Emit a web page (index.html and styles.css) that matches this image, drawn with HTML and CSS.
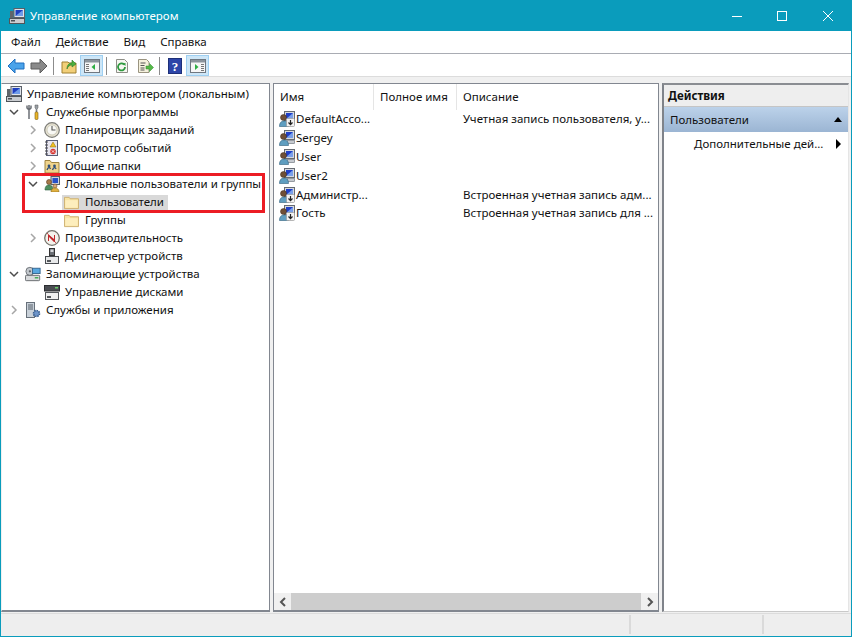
FILE: index.html
```html
<!DOCTYPE html>
<html lang="ru">
<head>
<meta charset="utf-8">
<title>Управление компьютером</title>
<link rel="stylesheet" href="styles.css">
</head>
<body>
<svg class="defs" width="0" height="0">
  <defs>
    <symbol id="computer" viewBox="0 0 16 16">
      <rect x="5" y="0.5" width="10.5" height="9" fill="#dfe3ea" stroke="#5a6068"/>
      <rect x="6.5" y="2" width="7.5" height="6" fill="#1f3fc0"/>
      <path d="M6.5 8 14 2v6z" fill="#6f9be8"/>
      <rect x="0.5" y="10.5" width="15" height="5" fill="#c9ccd0" stroke="#50555a"/>
      <rect x="2" y="12" width="4" height="1.5" fill="#4a4f55"/>
      <rect x="1" y="3" width="3.5" height="7" fill="#60656b"/>
    </symbol>
    <symbol id="tools" viewBox="0 0 16 16">
      <path d="M4 1v5M2 1.500v2.500l2 2 2-2V1.500M4 6v9" fill="none" stroke="#6b6f75" stroke-width="1.500"/>
      <path d="M10 1h3v3l-1 1v3h-1V5l-1-1z" fill="#9aa0a6" stroke="#555"  stroke-width=".5"/>
      <rect x="10" y="8" width="3" height="7.500" rx="1" fill="#e9b62c" stroke="#7a5a10" stroke-width=".6"/>
    </symbol>
    <symbol id="clock" viewBox="0 0 16 16">
      <circle cx="8" cy="8" r="7.300" fill="#e7e3d3" stroke="#7d7d78" stroke-width="1.200"/>
      <circle cx="8" cy="8" r="5" fill="#f8f8f4" stroke="#b9b5a0" stroke-width=".6"/>
      <path d="M8 4v4h3.500" fill="none" stroke="#555" stroke-width="1.100"/>
    </symbol>
    <symbol id="log" viewBox="0 0 16 16">
      <rect x="2.500" y="0.500" width="11" height="15" fill="#e8e6f0" stroke="#5a5f78"/>
      <path d="M1 2h3M1 5h3M1 8h3M1 11h3M1 14h3" stroke="#444" stroke-width="1"/>
      <path d="M9 2l3 5H6z" fill="#f0c020" stroke="#8a6a10" stroke-width=".5"/>
      <circle cx="9" cy="11.500" r="2.700" fill="#d8322e"/>
      <path d="M7.800 10.300l2.400 2.400M10.200 10.300l-2.400 2.400" stroke="#fff" stroke-width=".8"/>
    </symbol>
    <symbol id="share" viewBox="0 0 16 16">
      <path d="M1 15V2.500h5l1.500 2H15V15z" fill="#f0d48c" stroke="#a08440"/>
      <path d="M3 12c1-3 3-3 3.500-1M8.500 12c1-3 3-3 3.500-1" fill="none" stroke="#30507a" stroke-width="1.300"/>
      <circle cx="5" cy="8" r="1.400" fill="#30507a"/><circle cx="10.500" cy="8" r="1.400" fill="#30507a"/>
    </symbol>
    <symbol id="localusers" viewBox="0 0 16 16">
      <rect x="7" y="0.500" width="8.500" height="8" fill="#cfd3da" stroke="#5a6068"/>
      <rect x="8.500" y="2" width="5.500" height="5" fill="#2850c8"/>
      <circle cx="5" cy="6" r="2.500" fill="#a87a4a" stroke="#5a3a20" stroke-width=".6"/>
      <path d="M1 14c0-4 2-5 4-5s4 1 4 5z" fill="#4f8f5f" stroke="#2f5f3f" stroke-width=".6"/>
      <circle cx="11" cy="10" r="2" fill="#d8a878" stroke="#704a28" stroke-width=".6"/>
      <path d="M7 16c0-3 2-4 4-4s4 1 4 4z" fill="#e0b040" stroke="#8a6a18" stroke-width=".6"/>
    </symbol>
    <symbol id="folder" viewBox="0 0 16 16">
      <path d="M0.500 14.500V2.500h5l1 1.500h9v10.500z" fill="#f9e4a2" stroke="#cdb070"/>
      <path d="M1.500 13.500V5.500h13v8z" fill="#fdeebd"/>
    </symbol>
    <symbol id="perf" viewBox="0 0 16 16">
      <circle cx="8" cy="8" r="7.300" fill="#f4f2ec" stroke="#75736b" stroke-width="1.300"/>
      <path d="M4 5v6l1 0V7l5 5h1V5h-1v4L5 5z" fill="#c0282c"/>
      <path d="M3 3l9 10" stroke="#c0282c" stroke-width=".8"/>
    </symbol>
    <symbol id="device" viewBox="0 0 16 16">
      <rect x="5.500" y="0.500" width="5" height="7" fill="#6a6e74" stroke="#333"/>
      <rect x="6.500" y="1.500" width="3" height="2.500" fill="#d6d8dc"/>
      <rect x="1.500" y="8.500" width="13" height="7" fill="#e8e9ea" stroke="#4a4d52"/>
      <rect x="3" y="12" width="4" height="2" fill="#55585c"/>
    </symbol>
    <symbol id="storage" viewBox="0 0 18 16">
      <rect x="0.500" y="9.500" width="16" height="6" rx="1" fill="#d8dadc" stroke="#5d6166"/>
      <rect x="11" y="11.500" width="4" height="1.500" fill="#35a84a"/>
      <circle cx="5.500" cy="5" r="4.500" fill="#c3c8cd" stroke="#686c72"/>
      <circle cx="5.500" cy="5" r="1.300" fill="#5f6368"/>
      <rect x="8.500" y="1.500" width="8.500" height="6" fill="#58a7e0" stroke="#31618a"/>
    </symbol>
    <symbol id="disk" viewBox="0 0 16 16">
      <rect x="0.500" y="1.500" width="15" height="5.500" fill="#4a4d52" stroke="#2c2e31"/>
      <rect x="11" y="3" width="3" height="1.500" fill="#6ccf6a"/>
      <rect x="1.500" y="8.500" width="13" height="7" fill="#f0f0f0" stroke="#55585c"/>
      <rect x="3" y="12" width="4" height="2" fill="#55585c"/>
    </symbol>
    <symbol id="services" viewBox="0 0 16 16">
      <rect x="1.500" y="0.500" width="8" height="15" fill="#c9d1d9" stroke="#67707a"/>
      <path d="M3 3h5M3 5h5M3 7h5" stroke="#57616b"/>
      <circle cx="11.500" cy="11.500" r="3" fill="#6d94c9" stroke="#3a5e8e" stroke-width="1.600" stroke-dasharray="1.500 .8"/>
    </symbol>
    <symbol id="user" viewBox="0 0 16 16">
      <rect x="5.500" y="0.500" width="10" height="9" fill="#d6d9de" stroke="#666b72"/>
      <rect x="7" y="2" width="7" height="6" fill="#1f3fc8"/>
      <path d="M7 8 14 2v6z" fill="#7aa0ea"/>
      <rect x="8" y="10.500" width="7.500" height="3" fill="#c6cad0" stroke="#777c83" stroke-width=".7"/>
      <circle cx="4.500" cy="6.500" r="3" fill="#6f4f36" stroke="#3c2a1a" stroke-width=".5"/>
      <path d="M0.500 15.500c0-4 2-5.500 4.500-5.500s4.500 1.500 4.500 5.500z" fill="#5f9ec0" stroke="#2f5f7c" stroke-width=".6"/>
    </symbol>
    <symbol id="userdis" viewBox="0 0 16 16">
      <use href="#user" width="16" height="16"/>
      <rect x="7.500" y="7.500" width="8" height="8" rx="1" fill="#f2f2f2" stroke="#9a9a9a" stroke-width=".7"/>
      <path d="M11.500 9v4.500M9.500 11.500l2 2.200 2-2.200" fill="none" stroke="#222" stroke-width="1.200"/>
    </symbol>
  </defs>
</svg>

<div class="window">
  <header class="titlebar">
    <svg class="title-icon"><use href="#computer"/></svg>
    <span class="title-text">Управление компьютером</span>
    <div class="caption">
      <svg class="cap-btn" viewBox="0 0 46 30"><path d="M19 15.500h10" stroke="#fff"/></svg>
      <svg class="cap-btn" viewBox="0 0 46 30"><rect x="18.500" y="10.500" width="9" height="9" fill="none" stroke="#fff"/></svg>
      <svg class="cap-btn" viewBox="0 0 46 30"><path d="M18 10l10 10M28 10 18 20" stroke="#fff" fill="none"/></svg>
    </div>
  </header>

  <nav class="menubar">
    <span class="menu-item">Файл</span>
    <span class="menu-item">Действие</span>
    <span class="menu-item">Вид</span>
    <span class="menu-item">Справка</span>
  </nav>

  <div class="toolbar">
    <span class="tool"><svg class="tool-svg" viewBox="0 0 18 16"><path d="M1 8l7-7v4h9v6H8v4z" fill="#4aa3ea" stroke="#1f6fc0"/></svg></span>
    <span class="tool"><svg class="tool-svg" viewBox="0 0 18 16"><path d="M17 8l-7-7v4H1v6h9v4z" fill="#8a8a8a" stroke="#5c5c5c"/></svg></span>
    <span class="sep"></span>
    <span class="tool"><svg class="tool-svg" viewBox="0 0 18 16"><path d="M2 15V4h6l1 1h7v10z" fill="#f2cf78" stroke="#a08030"/><path d="M7 11c0-4 2-6 5-6V2l4 4-4 3V7c-2 0-4 1-5 4z" fill="#4caf3f" stroke="#2d7a25" stroke-width=".6"/></svg></span>
    <span class="tool tool-on"><svg class="tool-svg" viewBox="0 0 18 16"><rect x="1.500" y="1.500" width="15" height="13" fill="#f6f6f6" stroke="#6f7780"/><rect x="2" y="2" width="14" height="2.500" fill="#8c949c"/><path d="M3 6.500h3M3 8.500h3M3 10.500h3M3 12.500h3" stroke="#777"/><path d="M12 6v6L8.500 9z" fill="#2fae44"/></svg></span>
    <span class="sep"></span>
    <span class="tool"><svg class="tool-svg" viewBox="0 0 18 16"><path d="M3.500 1.500h8l3 3v10h-11z" fill="#f7f7f2" stroke="#8f8f88"/><path d="M12 9a3.500 3.500 0 1 1-1-2.500" fill="none" stroke="#2f9a3f" stroke-width="1.800"/><path d="M9.500 5.500l3-.5v3z" fill="#2f9a3f"/></svg></span>
    <span class="tool"><svg class="tool-svg" viewBox="0 0 18 16"><path d="M2.500 1.500h8l2.500 2.500v10.500H2.500z" fill="#f5f1dd" stroke="#9a9480"/><path d="M4.500 5h5M4.500 7.500h4M4.500 10h4M4.500 12h4" stroke="#555"/><path d="M10 8h3.500V5.500L17.500 9.500l-4 4V11H10z" fill="#55b948" stroke="#2f8a2a" stroke-width=".5"/></svg></span>
    <span class="sep"></span>
    <span class="tool"><svg class="tool-svg" viewBox="0 0 18 16"><rect x="2.500" y="0.500" width="13" height="15" fill="#2d45a8" stroke="#1d2f78"/><text class="help-mark" x="9" y="13">?</text></svg></span>
    <span class="tool tool-on"><svg class="tool-svg" viewBox="0 0 18 16"><rect x="1.500" y="1.500" width="15" height="13" fill="#f6f6f6" stroke="#6f7780"/><rect x="2" y="2" width="14" height="2.500" fill="#8c949c"/><path d="M12 6.500h3M12 8.500h3M12 10.500h3M12 12.500h3" stroke="#777"/><path d="M6 6v6l3.500-3z" fill="#2fae44"/></svg></span>
  </div>

  <main class="panes">
    <section class="pane tree">
      <div class="row"><span class="twist"></span><svg class="ico"><use href="#computer"/></svg><span class="label">Управление компьютером (локальным)</span></div>
      <div class="row l1"><svg class="chev"><path d="M1 3l4 4 4-4" class="chev-open"/></svg><svg class="ico"><use href="#tools"/></svg><span class="label">Служебные программы</span></div>
      <div class="row l2"><svg class="chev"><path d="M3 1l4 4-4 4" class="chev-closed"/></svg><svg class="ico"><use href="#clock"/></svg><span class="label">Планировщик заданий</span></div>
      <div class="row l2"><svg class="chev"><path d="M3 1l4 4-4 4" class="chev-closed"/></svg><svg class="ico"><use href="#log"/></svg><span class="label">Просмотр событий</span></div>
      <div class="row l2"><svg class="chev"><path d="M3 1l4 4-4 4" class="chev-closed"/></svg><svg class="ico"><use href="#share"/></svg><span class="label">Общие папки</span></div>
      <div class="row l2"><svg class="chev"><path d="M1 3l4 4 4-4" class="chev-open"/></svg><svg class="ico"><use href="#localusers"/></svg><span class="label">Локальные пользователи и группы</span></div>
      <div class="row l3"><span class="selected"><svg class="ico"><use href="#folder"/></svg><span class="label">Пользователи</span></span></div>
      <div class="row l3"><span class="plain"><svg class="ico"><use href="#folder"/></svg><span class="label">Группы</span></span></div>
      <div class="row l2"><svg class="chev"><path d="M3 1l4 4-4 4" class="chev-closed"/></svg><svg class="ico"><use href="#perf"/></svg><span class="label">Производительность</span></div>
      <div class="row l2"><span class="twist"></span><svg class="ico"><use href="#device"/></svg><span class="label">Диспетчер устройств</span></div>
      <div class="row l1"><svg class="chev"><path d="M1 3l4 4 4-4" class="chev-open"/></svg><svg class="ico"><use href="#storage"/></svg><span class="label">Запоминающие устройства</span></div>
      <div class="row l2"><span class="twist"></span><svg class="ico"><use href="#disk"/></svg><span class="label">Управление дисками</span></div>
      <div class="row l1"><svg class="chev"><path d="M3 1l4 4-4 4" class="chev-closed"/></svg><svg class="ico"><use href="#services"/></svg><span class="label">Службы и приложения</span></div>
      <div class="highlight"></div>
    </section>

    <section class="pane list">
      <div class="list-head">
        <span class="col col-name">Имя</span>
        <span class="col col-full">Полное имя</span>
        <span class="col col-desc">Описание</span>
      </div>
      <div class="list-body">
        <div class="list-row"><span class="cell-name"><svg class="ico"><use href="#userdis"/></svg><span class="user">DefaultAcco...</span></span><span class="cell-full"></span><span class="cell-desc">Учетная запись пользователя, у...</span></div>
        <div class="list-row"><span class="cell-name"><svg class="ico"><use href="#user"/></svg><span class="user">Sergey</span></span><span class="cell-full"></span><span class="cell-desc"></span></div>
        <div class="list-row"><span class="cell-name"><svg class="ico"><use href="#user"/></svg><span class="user">User</span></span><span class="cell-full"></span><span class="cell-desc"></span></div>
        <div class="list-row"><span class="cell-name"><svg class="ico"><use href="#user"/></svg><span class="user">User2</span></span><span class="cell-full"></span><span class="cell-desc"></span></div>
        <div class="list-row"><span class="cell-name"><svg class="ico"><use href="#userdis"/></svg><span class="user">Администр...</span></span><span class="cell-full"></span><span class="cell-desc">Встроенная учетная запись адм...</span></div>
        <div class="list-row"><span class="cell-name"><svg class="ico"><use href="#userdis"/></svg><span class="user">Гость</span></span><span class="cell-full"></span><span class="cell-desc">Встроенная учетная запись для ...</span></div>
      </div>
      <div class="hscroll">
        <span class="scroll-btn"><svg class="scroll-arrow" viewBox="0 0 8 10"><path d="M6 1 2 5l4 4" /></svg></span>
        <span class="scroll-thumb"></span>
        <span class="scroll-btn"><svg class="scroll-arrow" viewBox="0 0 8 10"><path d="M2 1l4 4-4 4" /></svg></span>
      </div>
    </section>

    <aside class="pane actions">
      <div class="act-head">Действия</div>
      <div class="act-group"><span>Пользователи</span><span class="tri-up"></span></div>
      <div class="act-item"><span>Дополнительные дей...</span><span class="tri-right"></span></div>
    </aside>
  </main>

  <footer class="statusbar">
    <span class="st st-main"></span>
    <span class="st st-mid"></span>
    <span class="st st-end"></span>
  </footer>
</div>
</body>
</html>
```

FILE: styles.css
```css
* { box-sizing: border-box; }
html, body { margin: 0; padding: 0; height: 100%; background: #fff; }
body { font: 11.5px/18px "Noto Sans", "Open Sans", sans-serif; color: #111; overflow: hidden; }
.defs { position: absolute; }

.window {
  width: 852px; height: 637px;
  display: flex; flex-direction: column;
  border: 1px solid #0a9cbc; border-top: 0;
  background: #f0f0f0;
}

.titlebar {
  height: 31px; flex: none;
  background: #0a9cbc; color: #fff;
  display: flex; align-items: center;
  padding-left: 8px;
  font-size: 11.5px;
}
.title-icon { width: 16px; height: 16px; margin-right: 5px; }
.caption { margin-left: auto; display: flex; }
.cap-btn { width: 46px; height: 30px; }

.menubar {
  height: 23px; flex: none;
  background: #fff;
  border-bottom: 1px solid #a9acb3;
  display: flex; align-items: center;
  padding-left: 10px; gap: 15px;
}

.toolbar {
  height: 23px; flex: none;
  background: #fff;
  border-bottom: 1px solid #dcdcdc;
  display: flex; align-items: center;
  padding: 1px 0 0 3px;
}
.tool { width: 23px; height: 21px; display: flex; align-items: center; justify-content: center; border: 1px solid transparent; }
.tool-on { background: #cde6f7; border-color: #9fd0f2; }
.tool-svg { width: 18px; height: 16px; }
.help-mark { font: bold 13px "Liberation Serif", serif; fill: #fff; text-anchor: middle; }
.sep { width: 1px; height: 18px; background: #8c8c8c; margin: 0 3px; }

.panes {
  flex: 1; min-height: 0;
  display: flex; gap: 3px;
  padding: 6px 2px 1px 0;
  background: #f0f0f0;
}
.pane { background: #fff; position: relative; }

.tree {
  width: 269px;
  border: 1px solid #828790; border-bottom-width: 2px;
  border-left-color: #f0f0f0;
  padding-top: 1px;
}
.row { height: 18px; display: flex; align-items: center; white-space: nowrap; padding-left: 2px; }
.row.l1 { padding-left: 7px; }
.row.l2 { padding-left: 26px; }
.row.l3 { padding-left: 60px; }
.row > .twist { width: 0; }
.chev { width: 10px; height: 10px; margin-right: 6px; flex: none; }
.row > .twist + .ico { margin-left: 16px; }
.row:first-child > .twist + .ico { margin-left: 2px; }
.chev-open, .chev-closed { fill: none; stroke-width: 1.5; }
.chev-open { stroke: #4d4d4d; }
.chev-closed { stroke: #a6a6a6; }
.ico { width: 16px; height: 16px; flex: none; }
.label { margin-left: 5px; line-height: 16px; }
.selected, .plain { display: flex; align-items: center; height: 15px; padding: 0 4px 0 2px; }
.selected { background: #d9d9d9; }
.selected .ico, .plain .ico { width: 15px; height: 15px; }
.selected .label, .plain .label { margin-left: 6px; }

.highlight {
  position: absolute; left: 20px; top: 89px;
  width: 243px; height: 40px;
  border: 3px solid #ec1c24;
  pointer-events: none;
}

.list {
  width: 386px;
  border: 1px solid #828790; border-bottom-width: 2px;
  display: flex; flex-direction: column;
}
.list-head { height: 26px; flex: none; display: flex; background: #fff; }
.col { padding-left: 6px; border-right: 1px solid #e5e5e5; line-height: 25px; }
.col-name { width: 100px; }
.col-full { width: 83px; }
.col-desc { flex: 1; border-right: 0; }
.list-body { flex: 1; }
.list-row { height: 18.8px; display: flex; align-items: center; white-space: nowrap; }
.cell-name { width: 100px; flex: none; display: flex; align-items: center; padding-left: 5px; }
.cell-full { width: 83px; flex: none; }
.cell-desc { padding-left: 6px; }
.user { margin-left: 1px; }

.hscroll { height: 17px; flex: none; display: flex; background: #f0f0f0; }
.scroll-btn { width: 17px; display: flex; align-items: center; justify-content: center; }
.scroll-arrow { width: 8px; height: 10px; fill: none; stroke: #555; stroke-width: 2; }
.scroll-thumb { flex: 1; background: #cdcdcd; }

.actions {
  flex: 1;
  border: 1px solid #c9c9c9; border-left: 2px solid #7f838a; border-top: 2px solid #8a8d92;
  border-right-color: #e5e5e5;
}
.act-head { height: 22px; background: #eeeeee; border-bottom: 1px solid #c5c5c5; font-weight: 700; padding-left: 4px; line-height: 21px; }
.act-group {
  height: 25px; background: linear-gradient(#bcd2ea, #9bb5d3);
  display: flex; align-items: center; justify-content: space-between;
  padding: 0 6px 0 6px;
}
.tri-up { width: 0; height: 0; border: 4.500px solid transparent; border-top: 0; border-bottom: 5px solid #000; }
.act-item { height: 24px; display: flex; align-items: center; justify-content: space-between; padding: 0 7px 0 30px; white-space: nowrap; }
.tri-right { width: 0; height: 0; border: 5px solid transparent; border-right: 0; border-left: 5px solid #000; }

.statusbar { height: 23px; flex: none; display: flex; background: #eeeeee; padding: 1px 0 2px; border-top: 1px solid #dcdcdc; }
.st-main { width: 630px; border-right: 2px solid #dadada; }
.st-mid { width: 133px; border-right: 2px solid #dadada; }
.st-end { flex: 1; }
```
